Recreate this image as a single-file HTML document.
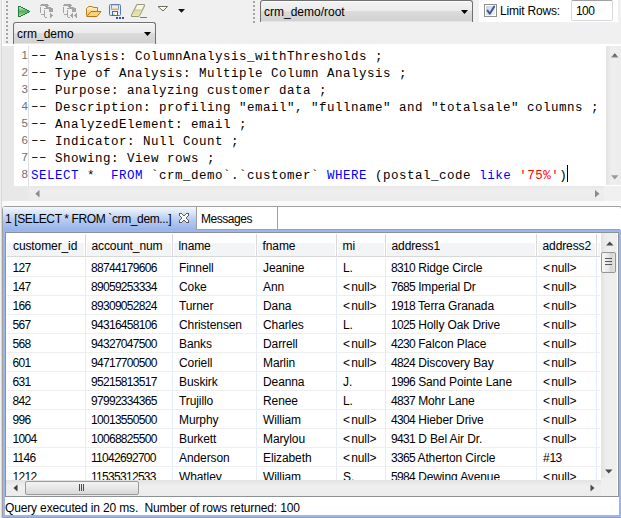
<!DOCTYPE html>
<html><head><meta charset="utf-8">
<style>
*{margin:0;padding:0;box-sizing:border-box}
html,body{width:621px;height:518px;overflow:hidden;background:#f0f0f0;position:relative;font-family:"Liberation Sans",sans-serif;font-size:12px;color:#000}
.a{position:absolute}
.ui{font-family:"Liberation Sans",sans-serif;font-size:12px;white-space:pre;line-height:14px}
.mono{font-family:"Liberation Mono",monospace;font-size:12.5px;letter-spacing:0.5px;white-space:pre;line-height:17px}
.grip{background-image:repeating-linear-gradient(to bottom,#a6a6a6 0,#a6a6a6 2px,transparent 2px,transparent 4px)}
.combo{border:1px solid #707070;border-bottom:none;border-radius:3px 3px 0 0;background:linear-gradient(to bottom,#fdfdfd 0,#fdfdfd 1px,#f2f2f2 1px,#ebebeb 48%,#dcdcdc 48%,#d1d1d1 calc(100% - 1px),#e6e6e6 calc(100% - 1px))}
.c{font-family:"Liberation Sans",sans-serif;font-size:12px;white-space:pre;line-height:14px}
.c{letter-spacing:-0.1px}
.n{letter-spacing:-0.7px}
.nl{letter-spacing:1.2px}
.kw{color:#0000ff}
.str{color:#ff0000}
</style></head><body>
<!-- far-left lines -->
<div class="a" style="left:1px;top:0;width:1px;height:518px;background:#d8d8d8"></div>
<div class="a" style="left:2px;top:0;width:1px;height:206px;background:#fafafa"></div>
<!-- grippers -->
<div class="a grip" style="left:6px;top:1px;width:2px;height:43px"></div>
<div class="a grip" style="left:253px;top:1px;width:2px;height:22px"></div>

<!-- toolbar icons -->
<svg class="a" style="left:0;top:0" width="200" height="22" viewBox="0 0 200 22">
  <defs>
    <linearGradient id="gpv" gradientUnits="userSpaceOnUse" x1="0" y1="7" x2="0" y2="16"><stop offset="0" stop-color="#d2eca0"/><stop offset="0.5" stop-color="#4fae6a"/><stop offset="1" stop-color="#a6e07e"/></linearGradient>
    <linearGradient id="gf" x1="0" y1="0" x2="0" y2="1"><stop offset="0" stop-color="#fff4c8"/><stop offset="1" stop-color="#f1c464"/></linearGradient>
    <linearGradient id="gs" x1="0" y1="0" x2="0" y2="1"><stop offset="0" stop-color="#ffffff"/><stop offset="1" stop-color="#c8d8f0"/></linearGradient>
  </defs>
  <g shape-rendering="crispEdges"><g fill="url(#gpv)"><rect x="19" y="7" width="2" height="1"/><rect x="19" y="8" width="4" height="1"/><rect x="19" y="9" width="6" height="1"/><rect x="19" y="10" width="8" height="1"/><rect x="19" y="11" width="10" height="1"/><rect x="19" y="12" width="8" height="1"/><rect x="19" y="13" width="6" height="1"/><rect x="19" y="14" width="4" height="1"/><rect x="19" y="15" width="2" height="1"/></g><g fill="#237a3a"><rect x="18" y="6" width="1" height="11"/><rect x="19" y="6" width="2" height="1"/><rect x="21" y="7" width="2" height="1"/><rect x="23" y="8" width="2" height="1"/><rect x="25" y="9" width="2" height="1"/><rect x="27" y="10" width="2" height="1"/><rect x="29" y="11" width="1" height="1"/><rect x="27" y="12" width="2" height="1"/><rect x="25" y="13" width="2" height="1"/><rect x="23" y="14" width="2" height="1"/><rect x="21" y="15" width="2" height="1"/><rect x="19" y="16" width="2" height="1"/></g></g>
  <g fill="#a4a4a4" shape-rendering="crispEdges"><g transform="translate(0,0)"><rect x="41" y="4" width="7" height="1"/><rect x="40" y="5" width="9" height="1"/><rect x="45" y="6" width="3" height="1"/><rect x="40" y="7" width="1" height="6"/><rect x="46" y="7" width="5" height="1"/><rect x="44" y="8" width="9" height="1"/><rect x="49" y="9" width="4" height="3"/><rect x="44" y="10" width="1" height="7"/><rect x="41" y="14" width="3" height="1"/><rect x="45" y="17" width="2" height="1"/><rect x="50" y="13" width="1" height="5"/><rect x="51" y="14" width="1" height="3"/><rect x="52" y="15" width="1" height="1"/></g></g>
  <g fill="#a4a4a4" shape-rendering="crispEdges"><g transform="translate(23,0)"><rect x="41" y="4" width="7" height="1"/><rect x="40" y="5" width="9" height="1"/><rect x="45" y="6" width="3" height="1"/><rect x="40" y="7" width="1" height="6"/><rect x="46" y="7" width="5" height="1"/><rect x="44" y="8" width="9" height="1"/><rect x="49" y="9" width="4" height="3"/><rect x="44" y="10" width="1" height="7"/><rect x="41" y="14" width="3" height="1"/><rect x="45" y="17" width="2" height="1"/></g><rect x="72" y="13" width="1" height="5"/><rect x="71" y="14" width="1" height="3"/><rect x="70" y="15" width="1" height="1"/><rect x="76" y="13" width="1" height="5"/><rect x="75" y="14" width="1" height="3"/><rect x="74" y="15" width="1" height="1"/></g>
  <!-- folder -->
  <path d="M86.5 15.5 V8.5 L87.5 7.5 H88 L88.5 6.5 H92.5 L93 7.5 H97.5 V11.5" fill="url(#gf)" stroke="#c07a22" stroke-width="1"/>
  <path d="M86.8 16.5 L91 11.5 H101 L97 16.5 Z" fill="#f7d47a" stroke="#b8741e" stroke-width="1" stroke-linejoin="round"/>
  <!-- save -->
  <rect x="109.5" y="4.5" width="11" height="11" rx="1" fill="#e4ecf8" stroke="#5b78ad"/>
  <rect x="111.5" y="5" width="7" height="4.5" fill="url(#gs)" stroke="#7d8fae" stroke-width="0.9"/>
  <rect x="111.5" y="8.2" width="7" height="1.3" fill="#f0d080"/>
  <rect x="112.5" y="11.5" width="5" height="4" fill="#fff" stroke="#4a67a6"/>
  <rect x="113" y="13.5" width="2" height="1.5" fill="#f0d080"/>
  <rect x="116" y="17" width="2" height="2" fill="#34549a"/><rect x="119" y="17" width="2" height="2" fill="#34549a"/><rect x="122" y="17" width="2" height="2" fill="#34549a"/>
  <!-- eraser -->
  <path d="M137.5 4.5 H143.5 Q145 4.5 144.4 6 L139.6 15.5 Q139 16.5 137.8 16.5 H132.5 Q131 16.5 131.6 15 L136.4 5.5 Q136.8 4.5 137.5 4.5 Z" fill="#f6f6ec" stroke="#9a9872" stroke-width="1.05"/>
  <path d="M134.6 10.2 H141.7 L139.2 15.6 H132.2 Z" fill="#e2e0a6"/>
  <path d="M134.4 10 H141.6" stroke="#b0ae80" stroke-width="0.8"/>
  <rect x="140" y="17" width="7" height="1" fill="#7c7c7c"/>
  <!-- chevrons -->
  <path d="M158 6.5 H167.5 L163 11 Z" fill="#fff" stroke="#6d6d60" stroke-width="1"/>
  <path d="M178 9 H185 L181.5 12.8 Z" fill="#111"/>
</svg>
<!-- combo crm_demo -->
<div class="a combo" style="left:13px;top:22px;width:143px;height:22px"></div>
<div class="a ui" style="left:17px;top:27px">crm_demo</div>
<svg class="a" style="left:144px;top:32px" width="8" height="5" viewBox="0 0 8 5"><path d="M0 0h7l-3.5 4z" fill="#000"/></svg>

<!-- combo crm_demo/root -->
<div class="a combo" style="left:260px;top:0px;width:213px;height:22px"></div>
<div class="a ui" style="left:264px;top:5px">crm_demo/root</div>
<svg class="a" style="left:461px;top:10px" width="8" height="5" viewBox="0 0 8 5"><path d="M0 0h7l-3.5 4z" fill="#000"/></svg>

<!-- limit rows panel -->
<div class="a" style="left:479px;top:0;width:139px;height:22px;background:#fff"></div>
<div class="a" style="left:484px;top:4px;width:13px;height:13px;border:1px solid #8e8f8f;background:#fff"></div><div class="a" style="left:486px;top:6px;width:9px;height:9px;background:linear-gradient(135deg,#cdd3dc,#f2f2f2)"></div>
<svg class="a" style="left:486px;top:5px" width="10" height="11" viewBox="0 0 10 11"><path d="M1.6 5.6 L3.8 8.8 L8.2 1.6" fill="none" stroke="#44579a" stroke-width="2" stroke-linecap="round" stroke-linejoin="round"/></svg>
<div class="a ui" style="left:500px;top:4px;letter-spacing:-0.2px">Limit Rows:</div>
<div class="a" style="left:571px;top:0;width:42px;height:21px;border:1px solid #d5d9df;border-top-color:#9da0a6;border-radius:2px;background:#fff"></div>
<div class="a ui" style="left:576px;top:4px;letter-spacing:-0.6px">100</div>

<!-- editor -->
<div class="a" style="left:2px;top:44px;width:12px;height:2px;background:#fff"></div><div class="a" style="left:2px;top:46px;width:12px;height:155px;background:#e8e8e8"></div>
<div class="a" style="left:2px;top:201px;width:619px;height:5px;background:#fafafa"></div>
<div class="a" style="left:14px;top:44px;width:607px;height:142px;background:#fff"></div>
<div class="a" style="left:28px;top:46px;width:1px;height:140px;background:#e0e0e0"></div>
<div class="a" style="left:14px;top:47px;width:14px;font-family:'Liberation Sans';font-size:11.5px;line-height:17px;color:#707070;text-align:right;padding-right:0px">1<br>2<br>3<br>4<br>5<br>6<br>7<br>8</div>
<div class="a mono" style="left:31px;top:49px"><span style="position:relative;top:-1px">––</span> Analysis: ColumnAnalysis_withThresholds ;
<span style="position:relative;top:-1px">––</span> Type of Analysis: Multiple Column Analysis ;
<span style="position:relative;top:-1px">––</span> Purpose: analyzing customer data ;
<span style="position:relative;top:-1px">––</span> Description: profiling "email", "fullname" and "totalsale" columns ;
<span style="position:relative;top:-1px">––</span> AnalyzedElement: email ;
<span style="position:relative;top:-1px">––</span> Indicator: Null Count ;
<span style="position:relative;top:-1px">––</span> Showing: View rows ;
<span class="kw">SELECT</span> *  <span class="kw">FROM</span> `crm_demo`.`customer` <span class="kw">WHERE</span> (postal_code <span class="kw">like</span> <span class="str">'75%'</span>)</div>
<div class="a" style="left:567px;top:165px;width:1px;height:17px;background:#000"></div>
<!-- editor vscroll -->
<div class="a" style="left:606px;top:46px;width:15px;height:139px;background:linear-gradient(to right,#e3e3e3,#efefef 40%,#ececec)"></div>
<svg class="a" style="left:611px;top:53px" width="8" height="5" viewBox="0 0 8 5"><defs><linearGradient id="ua" x1="0" y1="0" x2="0" y2="1"><stop offset="0" stop-color="#4a4a4a"/><stop offset="1" stop-color="#8a8a8a"/></linearGradient></defs><path d="M0 4.5h7.5L3.75 0.3z" fill="url(#ua)"/></svg>
<svg class="a" style="left:611px;top:175px" width="8" height="5" viewBox="0 0 8 5"><path d="M0 0.3h7.5L3.75 4.5z" fill="#9a9a9a"/></svg>
<!-- editor hscroll -->
<div class="a" style="left:14px;top:186px;width:15px;height:15px;background:#e8e8e8"></div>
<div class="a" style="left:29px;top:186px;width:575px;height:15px;background:linear-gradient(to bottom,#e8e8e8,#eeeeee 30%,#ebebeb)"></div>
<svg class="a" style="left:35px;top:190px" width="5" height="8" viewBox="0 0 5 8"><path d="M4.5 0v7.5L0.3 3.75z" fill="#8a8a8a"/></svg>
<svg class="a" style="left:595px;top:190px" width="5" height="8" viewBox="0 0 5 8"><path d="M0 0v7.5L4.5 3.75z" fill="#8a8a8a"/></svg>

<!-- result panel -->
<div class="a" style="left:2px;top:206px;width:620px;height:312px;border:1px solid #a0a0a0;border-radius:3px 3px 0 0;background:#fff"></div>
<div class="a" style="left:3px;top:207px;width:193px;height:23px;background:linear-gradient(to bottom,#f3f7fd 0,#d9e5f8 25%,#b6ccf2 55%,#97b4ea 100%)"></div>
<div class="a ui" style="left:5px;top:212px;letter-spacing:-0.38px">1 [SELECT * FROM `crm_dem...]</div>
<svg class="a" style="left:179px;top:213px" width="10" height="10" viewBox="0 0 10 10" shape-rendering="crispEdges"><rect x="0" y="0" width="1" height="1" fill="#5c5c5c"/><rect x="1" y="0" width="1" height="1" fill="#5c5c5c"/><rect x="2" y="0" width="1" height="1" fill="#5c5c5c"/><rect x="7" y="0" width="1" height="1" fill="#5c5c5c"/><rect x="8" y="0" width="1" height="1" fill="#5c5c5c"/><rect x="9" y="0" width="1" height="1" fill="#5c5c5c"/><rect x="0" y="1" width="1" height="1" fill="#5c5c5c"/><rect x="1" y="1" width="1" height="1" fill="#fff"/><rect x="2" y="1" width="1" height="1" fill="#fff"/><rect x="3" y="1" width="1" height="1" fill="#5c5c5c"/><rect x="6" y="1" width="1" height="1" fill="#5c5c5c"/><rect x="7" y="1" width="1" height="1" fill="#fff"/><rect x="8" y="1" width="1" height="1" fill="#fff"/><rect x="9" y="1" width="1" height="1" fill="#5c5c5c"/><rect x="0" y="2" width="1" height="1" fill="#5c5c5c"/><rect x="1" y="2" width="1" height="1" fill="#fff"/><rect x="2" y="2" width="1" height="1" fill="#fff"/><rect x="3" y="2" width="1" height="1" fill="#fff"/><rect x="4" y="2" width="1" height="1" fill="#5c5c5c"/><rect x="5" y="2" width="1" height="1" fill="#5c5c5c"/><rect x="6" y="2" width="1" height="1" fill="#fff"/><rect x="7" y="2" width="1" height="1" fill="#fff"/><rect x="8" y="2" width="1" height="1" fill="#fff"/><rect x="9" y="2" width="1" height="1" fill="#5c5c5c"/><rect x="1" y="3" width="1" height="1" fill="#5c5c5c"/><rect x="2" y="3" width="1" height="1" fill="#fff"/><rect x="3" y="3" width="1" height="1" fill="#fff"/><rect x="4" y="3" width="1" height="1" fill="#fff"/><rect x="5" y="3" width="1" height="1" fill="#fff"/><rect x="6" y="3" width="1" height="1" fill="#fff"/><rect x="7" y="3" width="1" height="1" fill="#fff"/><rect x="8" y="3" width="1" height="1" fill="#5c5c5c"/><rect x="2" y="4" width="1" height="1" fill="#5c5c5c"/><rect x="3" y="4" width="1" height="1" fill="#fff"/><rect x="4" y="4" width="1" height="1" fill="#fff"/><rect x="5" y="4" width="1" height="1" fill="#fff"/><rect x="6" y="4" width="1" height="1" fill="#fff"/><rect x="7" y="4" width="1" height="1" fill="#5c5c5c"/><rect x="2" y="5" width="1" height="1" fill="#5c5c5c"/><rect x="3" y="5" width="1" height="1" fill="#fff"/><rect x="4" y="5" width="1" height="1" fill="#fff"/><rect x="5" y="5" width="1" height="1" fill="#fff"/><rect x="6" y="5" width="1" height="1" fill="#fff"/><rect x="7" y="5" width="1" height="1" fill="#5c5c5c"/><rect x="1" y="6" width="1" height="1" fill="#5c5c5c"/><rect x="2" y="6" width="1" height="1" fill="#fff"/><rect x="3" y="6" width="1" height="1" fill="#fff"/><rect x="4" y="6" width="1" height="1" fill="#fff"/><rect x="5" y="6" width="1" height="1" fill="#fff"/><rect x="6" y="6" width="1" height="1" fill="#fff"/><rect x="7" y="6" width="1" height="1" fill="#fff"/><rect x="8" y="6" width="1" height="1" fill="#5c5c5c"/><rect x="0" y="7" width="1" height="1" fill="#5c5c5c"/><rect x="1" y="7" width="1" height="1" fill="#fff"/><rect x="2" y="7" width="1" height="1" fill="#fff"/><rect x="3" y="7" width="1" height="1" fill="#fff"/><rect x="4" y="7" width="1" height="1" fill="#5c5c5c"/><rect x="5" y="7" width="1" height="1" fill="#5c5c5c"/><rect x="6" y="7" width="1" height="1" fill="#fff"/><rect x="7" y="7" width="1" height="1" fill="#fff"/><rect x="8" y="7" width="1" height="1" fill="#fff"/><rect x="9" y="7" width="1" height="1" fill="#5c5c5c"/><rect x="0" y="8" width="1" height="1" fill="#5c5c5c"/><rect x="1" y="8" width="1" height="1" fill="#fff"/><rect x="2" y="8" width="1" height="1" fill="#fff"/><rect x="3" y="8" width="1" height="1" fill="#5c5c5c"/><rect x="6" y="8" width="1" height="1" fill="#5c5c5c"/><rect x="7" y="8" width="1" height="1" fill="#fff"/><rect x="8" y="8" width="1" height="1" fill="#fff"/><rect x="9" y="8" width="1" height="1" fill="#5c5c5c"/><rect x="0" y="9" width="1" height="1" fill="#5c5c5c"/><rect x="1" y="9" width="1" height="1" fill="#5c5c5c"/><rect x="2" y="9" width="1" height="1" fill="#5c5c5c"/><rect x="7" y="9" width="1" height="1" fill="#5c5c5c"/><rect x="8" y="9" width="1" height="1" fill="#5c5c5c"/><rect x="9" y="9" width="1" height="1" fill="#5c5c5c"/></svg>
<div class="a" style="left:196px;top:207px;width:1px;height:22px;background:#a0a0a0"></div>
<div class="a" style="left:277px;top:207px;width:1px;height:22px;background:#a0a0a0"></div>
<div class="a" style="left:196px;top:229px;width:424px;height:1px;background:#a0a0a0"></div>
<div class="a ui" style="left:201px;top:212px;letter-spacing:-0.45px">Messages</div>
<!-- blue frame -->
<div class="a" style="left:3px;top:230px;width:618px;height:287px;background:#9ab6ea"></div>
<!-- grid border -->
<div class="a" style="left:5px;top:232px;width:614px;height:265px;border:1px solid #8d9198;background:#fff"></div>
<div class="a" id="grid" style="left:6px;top:233px;width:594px;height:247px;overflow:hidden">
<div class="a" style="left:1px;top:10px;width:593px;height:13px;background:#f3f4f6"></div>
<div class="a" style="left:1px;top:23px;width:593px;height:1px;background:#d8d8d8"></div>
<div class="a" style="left:78px;top:1px;width:3px;height:22px;background:#fff"></div>
<div class="a" style="left:79px;top:1px;width:1px;height:22px;background:#dadada"></div>
<div class="a" style="left:79px;top:25px;width:1px;height:222px;background:#e3ecf9"></div>
<div class="a" style="left:165px;top:1px;width:3px;height:22px;background:#fff"></div>
<div class="a" style="left:166px;top:1px;width:1px;height:22px;background:#dadada"></div>
<div class="a" style="left:166px;top:25px;width:1px;height:222px;background:#e3ecf9"></div>
<div class="a" style="left:249px;top:1px;width:3px;height:22px;background:#fff"></div>
<div class="a" style="left:250px;top:1px;width:1px;height:22px;background:#dadada"></div>
<div class="a" style="left:250px;top:25px;width:1px;height:222px;background:#e3ecf9"></div>
<div class="a" style="left:329px;top:1px;width:3px;height:22px;background:#fff"></div>
<div class="a" style="left:330px;top:1px;width:1px;height:22px;background:#dadada"></div>
<div class="a" style="left:330px;top:25px;width:1px;height:222px;background:#e3ecf9"></div>
<div class="a" style="left:378px;top:1px;width:3px;height:22px;background:#fff"></div>
<div class="a" style="left:379px;top:1px;width:1px;height:22px;background:#dadada"></div>
<div class="a" style="left:379px;top:25px;width:1px;height:222px;background:#e3ecf9"></div>
<div class="a" style="left:529px;top:1px;width:3px;height:22px;background:#fff"></div>
<div class="a" style="left:530px;top:1px;width:1px;height:22px;background:#dadada"></div>
<div class="a" style="left:530px;top:25px;width:1px;height:222px;background:#e3ecf9"></div>
<div class="a" style="left:589px;top:1px;width:3px;height:22px;background:#fff"></div>
<div class="a" style="left:590px;top:1px;width:1px;height:22px;background:#dadada"></div>
<div class="a" style="left:590px;top:25px;width:1px;height:222px;background:#e3ecf9"></div>
<div class="a c" style="left:7.0px;top:6px">customer_id</div>
<div class="a c" style="left:85.5px;top:6px">account_num</div>
<div class="a c" style="left:172.5px;top:6px">lname</div>
<div class="a c" style="left:256.5px;top:6px">fname</div>
<div class="a c" style="left:336.5px;top:6px">mi</div>
<div class="a c" style="left:385.5px;top:6px">address<span class="n">1</span></div>
<div class="a c" style="left:536.5px;top:6px">address<span class="n">2</span></div>
<div class="a" style="left:1px;top:43px;width:593px;height:1px;background:#eeeeee"></div>
<div class="a c" style="left:6.5px;top:28px"><span class="n">127</span></div>
<div class="a c" style="left:85px;top:28px"><span class="n">88744179606</span></div>
<div class="a c" style="left:173px;top:28px">Finnell</div>
<div class="a c" style="left:257px;top:28px">Jeanine</div>
<div class="a c" style="left:337px;top:28px">L.</div>
<div class="a c" style="left:385px;top:28px"><span class="n">8310</span> Ridge Circle</div>
<div class="a c" style="left:537px;top:28px"><span class="nl">&lt;</span>null&gt;</div>
<div class="a" style="left:1px;top:62px;width:593px;height:1px;background:#eeeeee"></div>
<div class="a c" style="left:6.5px;top:47px"><span class="n">147</span></div>
<div class="a c" style="left:85px;top:47px"><span class="n">89059253334</span></div>
<div class="a c" style="left:173px;top:47px">Coke</div>
<div class="a c" style="left:257px;top:47px">Ann</div>
<div class="a c" style="left:337px;top:47px"><span class="nl">&lt;</span>null&gt;</div>
<div class="a c" style="left:385px;top:47px"><span class="n">7685</span> Imperial Dr</div>
<div class="a c" style="left:537px;top:47px"><span class="nl">&lt;</span>null&gt;</div>
<div class="a" style="left:1px;top:81px;width:593px;height:1px;background:#eeeeee"></div>
<div class="a c" style="left:6.5px;top:66px"><span class="n">166</span></div>
<div class="a c" style="left:85px;top:66px"><span class="n">89309052824</span></div>
<div class="a c" style="left:173px;top:66px">Turner</div>
<div class="a c" style="left:257px;top:66px">Dana</div>
<div class="a c" style="left:337px;top:66px"><span class="nl">&lt;</span>null&gt;</div>
<div class="a c" style="left:385px;top:66px"><span class="n">1918</span> Terra Granada</div>
<div class="a c" style="left:537px;top:66px"><span class="nl">&lt;</span>null&gt;</div>
<div class="a" style="left:1px;top:100px;width:593px;height:1px;background:#eeeeee"></div>
<div class="a c" style="left:6.5px;top:85px"><span class="n">567</span></div>
<div class="a c" style="left:85px;top:85px"><span class="n">94316458106</span></div>
<div class="a c" style="left:173px;top:85px">Christensen</div>
<div class="a c" style="left:257px;top:85px">Charles</div>
<div class="a c" style="left:337px;top:85px">L.</div>
<div class="a c" style="left:385px;top:85px"><span class="n">1025</span> Holly Oak Drive</div>
<div class="a c" style="left:537px;top:85px"><span class="nl">&lt;</span>null&gt;</div>
<div class="a" style="left:1px;top:119px;width:593px;height:1px;background:#eeeeee"></div>
<div class="a c" style="left:6.5px;top:104px"><span class="n">568</span></div>
<div class="a c" style="left:85px;top:104px"><span class="n">94327047500</span></div>
<div class="a c" style="left:173px;top:104px">Banks</div>
<div class="a c" style="left:257px;top:104px">Darrell</div>
<div class="a c" style="left:337px;top:104px"><span class="nl">&lt;</span>null&gt;</div>
<div class="a c" style="left:385px;top:104px"><span class="n">4230</span> Falcon Place</div>
<div class="a c" style="left:537px;top:104px"><span class="nl">&lt;</span>null&gt;</div>
<div class="a" style="left:1px;top:138px;width:593px;height:1px;background:#eeeeee"></div>
<div class="a c" style="left:6.5px;top:123px"><span class="n">601</span></div>
<div class="a c" style="left:85px;top:123px"><span class="n">94717700500</span></div>
<div class="a c" style="left:173px;top:123px">Coriell</div>
<div class="a c" style="left:257px;top:123px">Marlin</div>
<div class="a c" style="left:337px;top:123px"><span class="nl">&lt;</span>null&gt;</div>
<div class="a c" style="left:385px;top:123px"><span class="n">4824</span> Discovery Bay</div>
<div class="a c" style="left:537px;top:123px"><span class="nl">&lt;</span>null&gt;</div>
<div class="a" style="left:1px;top:157px;width:593px;height:1px;background:#eeeeee"></div>
<div class="a c" style="left:6.5px;top:142px"><span class="n">631</span></div>
<div class="a c" style="left:85px;top:142px"><span class="n">95215813517</span></div>
<div class="a c" style="left:173px;top:142px">Buskirk</div>
<div class="a c" style="left:257px;top:142px">Deanna</div>
<div class="a c" style="left:337px;top:142px">J.</div>
<div class="a c" style="left:385px;top:142px"><span class="n">1996</span> Sand Pointe Lane</div>
<div class="a c" style="left:537px;top:142px"><span class="nl">&lt;</span>null&gt;</div>
<div class="a" style="left:1px;top:176px;width:593px;height:1px;background:#eeeeee"></div>
<div class="a c" style="left:6.5px;top:161px"><span class="n">842</span></div>
<div class="a c" style="left:85px;top:161px"><span class="n">97992334365</span></div>
<div class="a c" style="left:173px;top:161px">Trujillo</div>
<div class="a c" style="left:257px;top:161px">Renee</div>
<div class="a c" style="left:337px;top:161px">L.</div>
<div class="a c" style="left:385px;top:161px"><span class="n">4837</span> Mohr Lane</div>
<div class="a c" style="left:537px;top:161px"><span class="nl">&lt;</span>null&gt;</div>
<div class="a" style="left:1px;top:195px;width:593px;height:1px;background:#eeeeee"></div>
<div class="a c" style="left:6.5px;top:180px"><span class="n">996</span></div>
<div class="a c" style="left:85px;top:180px"><span class="n">10013550500</span></div>
<div class="a c" style="left:173px;top:180px">Murphy</div>
<div class="a c" style="left:257px;top:180px">William</div>
<div class="a c" style="left:337px;top:180px"><span class="nl">&lt;</span>null&gt;</div>
<div class="a c" style="left:385px;top:180px"><span class="n">4304</span> Hieber Drive</div>
<div class="a c" style="left:537px;top:180px"><span class="nl">&lt;</span>null&gt;</div>
<div class="a" style="left:1px;top:214px;width:593px;height:1px;background:#eeeeee"></div>
<div class="a c" style="left:6.5px;top:199px"><span class="n">1004</span></div>
<div class="a c" style="left:85px;top:199px"><span class="n">10068825500</span></div>
<div class="a c" style="left:173px;top:199px">Burkett</div>
<div class="a c" style="left:257px;top:199px">Marylou</div>
<div class="a c" style="left:337px;top:199px"><span class="nl">&lt;</span>null&gt;</div>
<div class="a c" style="left:385px;top:199px"><span class="n">9431</span> D Bel Air Dr.</div>
<div class="a c" style="left:537px;top:199px"><span class="nl">&lt;</span>null&gt;</div>
<div class="a" style="left:1px;top:233px;width:593px;height:1px;background:#eeeeee"></div>
<div class="a c" style="left:6.5px;top:218px"><span class="n">1146</span></div>
<div class="a c" style="left:85px;top:218px"><span class="n">11042692700</span></div>
<div class="a c" style="left:173px;top:218px">Anderson</div>
<div class="a c" style="left:257px;top:218px">Elizabeth</div>
<div class="a c" style="left:337px;top:218px"><span class="nl">&lt;</span>null&gt;</div>
<div class="a c" style="left:385px;top:218px"><span class="n">3365</span> Atherton Circle</div>
<div class="a c" style="left:537px;top:218px">#<span class="n">13</span></div>
<div class="a" style="left:1px;top:252px;width:593px;height:1px;background:#eeeeee"></div>
<div class="a c" style="left:6.5px;top:237px"><span class="n">1212</span></div>
<div class="a c" style="left:85px;top:237px"><span class="n">11535312533</span></div>
<div class="a c" style="left:173px;top:237px">Whatley</div>
<div class="a c" style="left:257px;top:237px">William</div>
<div class="a c" style="left:337px;top:237px">S.</div>
<div class="a c" style="left:385px;top:237px"><span class="n">5984</span> Dewing Avenue</div>
<div class="a c" style="left:537px;top:237px"><span class="nl">&lt;</span>null&gt;</div>
</div>
<!-- grid vscroll -->
<div class="a" style="left:601px;top:233px;width:16px;height:245px;background:linear-gradient(to right,#e2e2e2,#ececec 30%,#efefef 60%,#eeeeee)"></div>
<svg class="a" style="left:606px;top:241px" width="8" height="5" viewBox="0 0 8 5"><path d="M0 4.5h7.5L3.75 0.5z" fill="#4a4a4a"/></svg>
<div class="a" style="left:601px;top:252px;width:15px;height:21px;border:1px solid #959595;border-radius:2px;background:linear-gradient(to right,#f6f6f6,#e8e8e8 50%,#d4d4d4 70%,#e4e4e4)"></div>
<div class="a" style="left:605px;top:258px;width:7px;height:1px;background:#5a5a5a;box-shadow:0 3px 0 #5a5a5a,0 6px 0 #5a5a5a"></div>
<svg class="a" style="left:605px;top:469px" width="8" height="5" viewBox="0 0 8 5"><path d="M0 0.5h7.5L3.75 4.5z" fill="#4a4a4a"/></svg>
<!-- grid hscroll -->
<div class="a" style="left:6px;top:480px;width:595px;height:16px;background:linear-gradient(to bottom,#e3e3e3,#efefef 40%,#ececec)"></div>
<div class="a" style="left:601px;top:478px;width:16px;height:18px;background:#f0f0f0"></div>
<svg class="a" style="left:13px;top:484px" width="5" height="8" viewBox="0 0 5 8"><path d="M4.5 0.5v7L0.5 4z" fill="#3a3a3a"/></svg>
<div class="a" style="left:25px;top:481px;width:114px;height:14px;border:1px solid #9a9a9a;border-radius:2px;background:linear-gradient(to bottom,#f4f4f4,#e4e4e4 60%,#d8d8d8)"></div>
<div class="a" style="left:79px;top:484px;width:1px;height:7px;background:#4a4a4a;box-shadow:2px 0 0 #4a4a4a,4px 0 0 #4a4a4a"></div>
<svg class="a" style="left:590px;top:484px" width="5" height="8" viewBox="0 0 5 8"><path d="M0.5 0.5v7L4.5 4z" fill="#4a4a4a"/></svg>
<!-- status -->
<div class="a" style="left:5px;top:497px;width:614px;height:18px;background:#fff"></div>
<div class="a ui" style="left:5px;top:501px;letter-spacing:-0.15px">Query executed in 20 ms.  Number of rows returned: 100</div>
</body></html>
